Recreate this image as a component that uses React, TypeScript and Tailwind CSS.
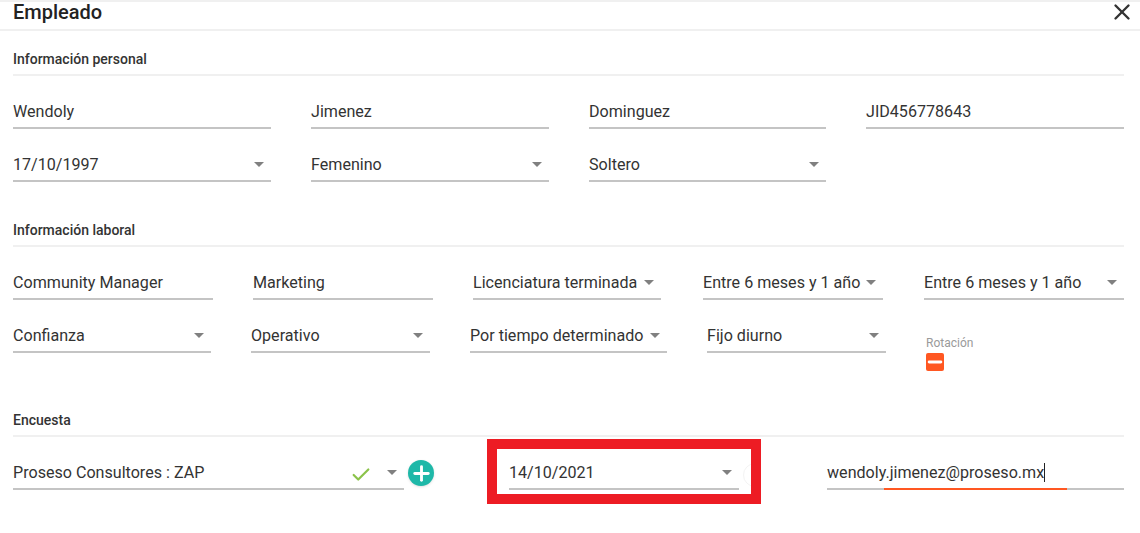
import { Check, Minus, Plus, X } from "lucide-react"
import type { ReactNode } from "react"

function Caret() {
  return <span className="h-0 w-0 border-x-[5px] border-t-[5px] border-x-transparent border-t-[#808080]" />
}

function Field({ value, select, className, children }: { value: string; select?: boolean; className: string; children?: ReactNode }) {
  return (
    <div className={`flex h-[26px] items-center justify-between border-b-2 border-[#c4c4c4] pb-[7px] text-[16.1px] leading-[20px] text-[#333] ${className}`}>
      <span className="whitespace-nowrap">{value}</span>
      {children}
      {select && <span className="mr-[7px] flex items-center"><Caret /></span>}
    </div>
  )
}

function SectionTitle({ title, className }: { title: string; className: string }) {
  return (
    <div className={`mr-[16px] border-b-2 border-[#f0f0f0] pb-[6px] text-[14px] leading-[18px] font-medium text-[#333] ${className}`}>
      {title}
    </div>
  )
}

export default function App() {
  return (
    <div className="h-[533px] w-[1140px] overflow-hidden border-t-2 border-[#f0f0f0] bg-white font-['Roboto',sans-serif]">
      <header className="flex h-[29px] items-start justify-between border-b-2 border-[#f0f0f0] pr-[5px] pl-[13px]">
        <h1 className="text-[20px] leading-[20px] font-medium text-[#222]">Empleado</h1>
        <X className="mt-[-3px] h-[26px] w-[26px] shrink-0 text-[#333]" strokeWidth={2.2} />
      </header>

      <main className="pl-[13px]">
        <SectionTitle title="Información personal" className="mt-[19px]" />
        <div className="mt-[27px] flex">
          <Field value="Wendoly" className="w-[258px]" />
          <Field value="Jimenez" className="ml-[40px] w-[238px]" />
          <Field value="Dominguez" className="ml-[40px] w-[237px]" />
          <Field value="JID456778643" className="ml-[40px] w-[258px]" />
        </div>
        <div className="mt-[27px] flex">
          <Field value="17/10/1997" select className="w-[258px]" />
          <Field value="Femenino" select className="ml-[40px] w-[238px]" />
          <Field value="Soltero" select className="ml-[40px] w-[237px]" />
        </div>

        <SectionTitle title="Información laboral" className="mt-[39px]" />
        <div className="mt-[27px] flex">
          <Field value="Community Manager" className="w-[200px]" />
          <Field value="Marketing" className="ml-[40px] w-[180px]" />
          <Field value="Licenciatura terminada" select className="ml-[40px] w-[188px]" />
          <Field value="Entre 6 meses y 1 año" select className="ml-[42px] w-[180px]" />
          <Field value="Entre 6 meses y 1 año" select className="ml-[41px] w-[200px]" />
        </div>
        <div className="mt-[27px] flex">
          <Field value="Confianza" select className="w-[198px]" />
          <Field value="Operativo" select className="ml-[40px] w-[179px]" />
          <Field value="Por tiempo determinado" select className="ml-[40px] w-[197px]" />
          <Field value="Fijo diurno" select className="ml-[40px] w-[179px]" />
          <div className="mt-[9px] ml-[40px]">
            <div className="text-[12px] leading-[14px] text-[#9a9a9a]">Rotación</div>
            <div className="mt-[3px] flex h-[18px] w-[18px] items-center justify-center rounded-[2px] bg-[#ff5722]">
              <Minus className="h-[20px] w-[20px] shrink-0 text-white" strokeWidth={3.5} />
            </div>
          </div>
        </div>

        <SectionTitle title="Encuesta" className="mt-[40px]" />
        <div className="flex items-start">
          <div className="mt-[27px] flex">
            <Field value="Proseso Consultores : ZAP" select className="w-[391px]">
              <Check className="mr-[15px] ml-auto h-[22px] w-[22px] shrink-0 translate-y-[2px] text-[#8bc34a]" strokeWidth={2.4} />
            </Field>
            <div className="mt-[-4px] ml-[4px] flex h-[26px] w-[26px] shrink-0 items-center justify-center rounded-full bg-[#1eb8a8] shadow-sm">
              <Plus className="h-[23px] w-[23px] shrink-0 text-white" strokeWidth={3} />
            </div>
          </div>
          <div className="relative mt-[2px] ml-[53px] h-[65px] w-[274px] overflow-hidden border-[10px] border-[#ed1c24] pt-[15px] pl-[12px]">
            <Field value="14/10/2021" select className="w-[230px]" />
            <span className="absolute top-[14px] left-[246px] h-[24px] w-[24px] rounded-full border border-[#f3f3f3]" />
          </div>
          <div className="mt-[27px] ml-[66px] w-[297px]">
            <div className="relative flex h-[26px] items-center border-b-2 border-[#c4c4c4] pb-[7px] text-[16.1px] leading-[20px] text-[#333]">
              <span className="whitespace-nowrap">wendoly.jimenez@proseso.mx</span>
              <span className="h-[19px] w-px bg-[#222]" />
              <span className="absolute top-[24px] left-[57px] h-[2px] w-[183px] bg-[#ff5722]" />
            </div>
          </div>
        </div>
      </main>
    </div>
  )
}
